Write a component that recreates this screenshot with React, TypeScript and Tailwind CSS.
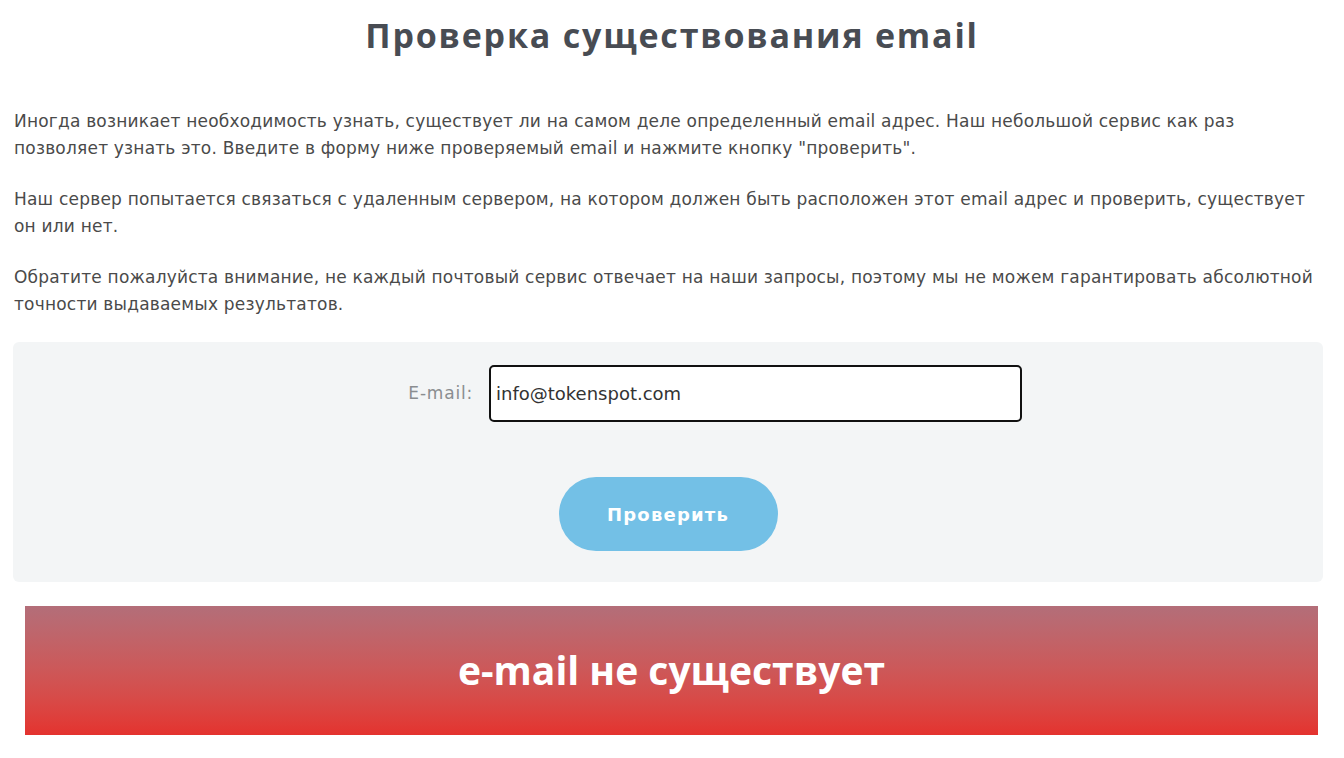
import React from 'react';

const App = () => {
  return (
    <div className="w-[1344px] h-[758px] bg-white overflow-hidden font-['DejaVu_Sans',sans-serif]">
      <h1 className="text-center text-[34px] font-bold text-[#484c53] pt-[10px] leading-[50px] tracking-[1.8px] font-['Open_Sans',sans-serif]">
        Проверка существования email
      </h1>

      <div className="px-[14px] mt-[48px] text-[17px] leading-[27px] text-[#4a4a4a] tracking-[0.2px]">
        <p>
          Иногда возникает необходимость узнать, существует ли на самом деле определенный email адрес. Наш небольшой сервис как раз
          <br />
          позволяет узнать это. Введите в форму ниже проверяемый email и нажмите кнопку "проверить".
        </p>
        <p className="mt-[24px]">
          Наш сервер попытается связаться с удаленным сервером, на котором должен быть расположен этот email адрес и проверить, существует
          <br />
          он или нет.
        </p>
        <p className="mt-[24px]">
          Обратите пожалуйста внимание, не каждый почтовый сервис отвечает на наши запросы, поэтому мы не можем гарантировать абсолютной
          <br />
          точности выдаваемых результатов.
        </p>
      </div>

      <div className="mx-[13px] w-[1310px] mt-[24px] h-[240px] bg-[#f3f5f6] rounded-[6px] flex flex-col pt-[23px]">
        <div className="flex items-center">
          <label className="w-[460px] text-right text-[17px] text-[#8a8d90] tracking-[0.8px]">E-mail:</label>
          <div className="ml-[16px] w-[533px] h-[57px] border-2 border-[#111] rounded-[5px] bg-white flex items-center px-[5px] text-[18px] text-[#333]">
            info@tokenspot.com
          </div>
        </div>
        <button className="mt-[55px] self-center w-[219px] h-[74px] rounded-full bg-[#73c0e6] text-white font-bold text-[18px] tracking-[1.2px]">
          Проверить
        </button>
      </div>

      <div className="mx-[25px] w-[1293px] mt-[24px] h-[129px] bg-gradient-to-b from-[#b36e79] to-[#e4322e] flex items-center justify-center">
        <span className="text-white font-bold text-[39px] font-['Open_Sans',sans-serif]">e-mail не существует</span>
      </div>
    </div>
  );
};

export default App;
